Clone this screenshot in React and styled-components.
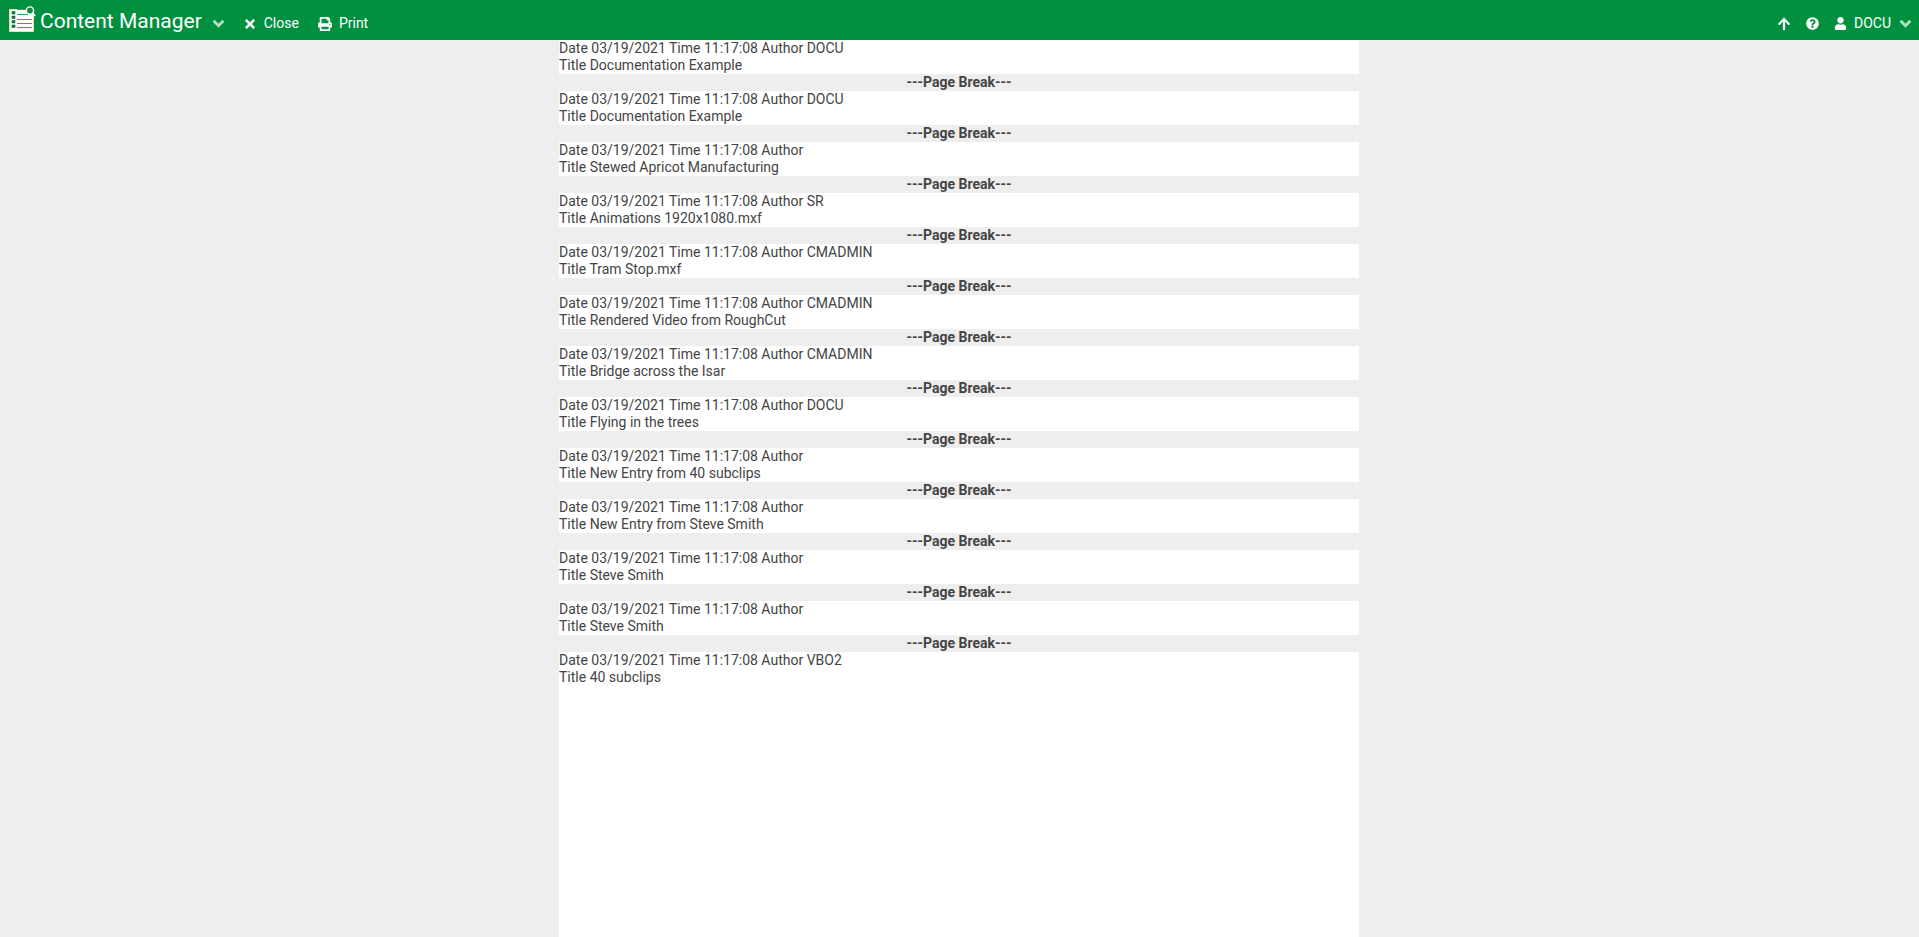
import styled, { createGlobalStyle } from "styled-components";
import { FaTimes, FaPrint, FaArrowUp, FaQuestionCircle, FaUser } from "react-icons/fa";

const entries = [
  ["DOCU", "Documentation Example"],
  ["DOCU", "Documentation Example"],
  ["", "Stewed Apricot Manufacturing"],
  ["SR", "Animations 1920x1080.mxf"],
  ["CMADMIN", "Tram Stop.mxf"],
  ["CMADMIN", "Rendered Video from RoughCut"],
  ["CMADMIN", "Bridge across the Isar"],
  ["DOCU", "Flying in the trees"],
  ["", "New Entry from 40 subclips"],
  ["", "New Entry from Steve Smith"],
  ["", "Steve Smith"],
  ["", "Steve Smith"],
  ["VBO2", "40 subclips"],
];

export default function App() {
  return (
    <Page>
      <GlobalStyle />
      <Header>
        <Left>
          <Logo />
          <Title>Content Manager</Title>
          <Chevron $title />
          <Action>
            <FaTimes size={14} />
            Close
          </Action>
          <Action>
            <FaPrint size={14} />
            Print
          </Action>
        </Left>
        <Right>
          <FaArrowUp size={14} />
          <FaQuestionCircle size={13} />
          <User>
            <FaUser size={13} />
            DOCU
          </User>
          <Chevron />
        </Right>
      </Header>
      <Report>
        {entries.map(([author, title], i) => (
          <div key={i}>
            <Line>Date 03/19/2021 Time 11:17:08 Author {author}</Line>
            <Line>Title {title}</Line>
            {i < entries.length - 1 && <PageBreak>---Page Break---</PageBreak>}
          </div>
        ))}
      </Report>
    </Page>
  );
}

function Chevron({ $title }) {
  return (
    <ChevronSvg $title={$title} viewBox="0 0 13 9" width="13" height="9">
      <path d="M1.6 1.8l4.9 4.9 4.9-4.9" fill="none" stroke="#fff" strokeWidth="3" />
    </ChevronSvg>
  );
}

function Logo() {
  return (
    <LogoSvg viewBox="0 0 27 26" width="27" height="26">
      <path d="M.5 3.5h16l3 5h5v17H.5z" fill="#fff" stroke="#e8e2b0" />
      <path d="M8 8.5h11M8 13.5h15M8 17.5h15M8 21.5h15M8 3.5h9" stroke="#2fa566" />
      <path d="M3 5.5h3v2.5H3zM3 10h3v2.5H3zM3 14.5h3V17H3zM3 19h3v2.5H3z" fill="#0b7f3f" stroke="#0b6a35" strokeWidth=".6" />
      <circle cx="21" cy="4.5" r="3.6" fill="#009040" stroke="#fff" strokeWidth="1.4" />
      <path d="M23.6 7.2l2.6 2.8" stroke="#fff" strokeWidth="1.8" />
    </LogoSvg>
  );
}

const GlobalStyle = createGlobalStyle`
  html, body {
    margin: 0;
    height: 100%;
    background: #eeeeee;
    overflow: hidden;
  }
`;

const Page = styled.div`
  height: 937px;
  display: flex;
  flex-direction: column;
  font-family: Roboto, sans-serif;
  font-size: 14px;
  line-height: 17px;
  color: #444;
`;

const Header = styled.header`
  flex: none;
  height: 40px;
  background: #009040;
  color: #fff;
  display: flex;
  justify-content: space-between;
  align-items: center;
  padding: 0 7px 0 9px;
`;

const Left = styled.div`
  display: flex;
  align-items: center;
`;

const LogoSvg = styled.svg`
  margin: -2px 4px 0 0;
`;

const Title = styled.span`
  font-size: 21px;
  line-height: 26px;
  padding-top: 2px;
`;

const ChevronSvg = styled.svg`
  opacity: 0.7;
  margin: ${(p) => (p.$title ? "7px 18px 0 10px" : "0 0 0 8px")};
`;

const Action = styled.span`
  display: flex;
  align-items: center;
  gap: 7px;
  margin-right: 19px;
  padding-top: 7px;
`;

const Right = styled.div`
  display: flex;
  align-items: center;
  gap: 15px;
  padding-top: 7px;
`;

const User = styled.span`
  display: flex;
  align-items: center;
  gap: 7px;
  margin-right: -15px;
`;

const Report = styled.main`
  flex: 1;
  width: 800px;
  margin-left: 559px;
  background: #fff;
`;

const Line = styled.div`
  height: 17px;
`;

const PageBreak = styled.div`
  height: 17px;
  background: #eeeeee;
  text-align: center;
  font-weight: 700;
`;
